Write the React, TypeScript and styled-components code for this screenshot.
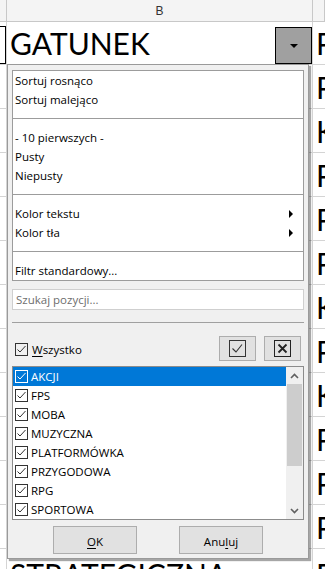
import React from "react";
import styled, { createGlobalStyle } from "styled-components";

const GlobalStyle = createGlobalStyle`
  html, body { margin: 0; padding: 0; background: #fff; }
  body { width: 325px; height: 569px; overflow: hidden; font-family: "Open Sans", sans-serif; }
  #root { width: 325px; height: 569px; }
`;

const Sheet = styled.div`
  position: relative;
  width: 325px;
  height: 569px;
  overflow: hidden;
  background: #fff;
`;

const HeaderRow = styled.div`
  display: grid;
  grid-template-columns: 7px 306px 1fr;
  height: 21px;
  background: #f4f4f4;
  border-bottom: 1px solid #c8c8c8;
`;

const HeaderCell = styled.div`
  border-right: 1px solid #c8c8c8;
  display: flex;
  align-items: center;
  justify-content: center;
  font: 12px "Liberation Sans", sans-serif;
  color: #333;
`;

const Row = styled.div<{ $h: number }>`
  display: grid;
  grid-template-columns: 7px 306px 1fr;
  height: ${(p) => p.$h}px;
  border-bottom: 1px solid #d4d4d4;
`;

const Cell = styled.div<{ $shift?: number }>`
  border-right: 1px solid #d4d4d4;
  display: flex;
  align-items: center;
  justify-content: space-between;
  overflow: hidden;
  white-space: nowrap;
  font: 30px "Lato", sans-serif;
  color: #000;
  padding-left: 3px;
  padding-top: ${(p) => p.$shift ?? 0}px;
`;

const FramedStub = styled.div`
  border-right: 1px solid #d4d4d4;
  display: flex;
  align-items: flex-end;
`;

const StubBox = styled.div`
  width: 5px;
  height: 36px;
  border: 1px solid #000;
  border-left: none;
  background: #fff;
`;

const TitleCell = styled(Cell)`
  align-items: stretch;
`;

const TitleText = styled.span`
  align-self: center;
`;

const DropButton = styled.div`
  align-self: flex-end;
  width: 35px;
  height: 35px;
  background: #a0a0a0;
  border: 1px solid #000;
  display: flex;
  align-items: center;
  justify-content: center;
`;

const SideCell = styled.div<{ $shift?: number }>`
  display: flex;
  align-items: center;
  overflow: hidden;
  white-space: nowrap;
  font: 30px "Lato", sans-serif;
  color: #000;
  padding-left: 3px;
  padding-top: ${(p) => p.$shift ?? 0}px;
`;

/* popup */
const Popup = styled.div`
  position: absolute;
  left: 7px;
  top: 64px;
  width: 302px;
  height: 495px;
  background: #f0f0f0;
  border: 1px solid #9a9a9a;
  box-shadow: 2px 2px 1px rgba(0, 0, 0, 0.35);
  padding: 5px 4px 4px 4px;
  box-sizing: border-box;
  display: flex;
  flex-direction: column;
  font-family: "Open Sans", sans-serif;
  font-size: 11.5px;
  color: #000;
`;

const MenuBox = styled.div`
  background: #fff;
  border: 1px solid #9c9c9c;
  display: flex;
  flex-direction: column;
`;

const MenuItem = styled.div`
  height: 19px;
  display: flex;
  align-items: center;
  justify-content: space-between;
  padding: 0 10px 0 2px;
  white-space: nowrap;
`;

const MenuSep = styled.div`
  height: 19px;
  display: flex;
  align-items: center;
  &::after {
    content: "";
    flex: 1;
    height: 1px;
    background: #9c9c9c;
  }
`;

const SubArrow = styled.span`
  width: 0;
  height: 0;
  border-top: 4px solid transparent;
  border-bottom: 4px solid transparent;
  border-left: 4px solid #000;
`;

const Search = styled.div`
  margin-top: 8px;
  height: 22px;
  box-sizing: border-box;
  background: #fff;
  border: 1px solid #cfcfcf;
  color: #6d6d6d;
  display: flex;
  align-items: center;
  padding-left: 3px;
`;

const Divider = styled.div`
  margin-top: 12px;
  height: 1px;
  background: #a0a0a0;
`;

const AllRow = styled.div`
  margin-top: 13px;
  height: 25px;
  display: flex;
  align-items: center;
  gap: 8px;
  padding: 0 3px 0 3px;
`;

const AllLabel = styled.label`
  flex: 1;
  display: flex;
  align-items: center;
  gap: 4px;
  padding-top: 2px;
`;

const IconButton = styled.div`
  width: 37px;
  height: 25px;
  box-sizing: border-box;
  background: #e1e1e1;
  border: 1px solid #adadad;
  display: flex;
  align-items: center;
  justify-content: center;
`;

const ListBox = styled.div`
  margin-top: 5px;
  height: 154px;
  box-sizing: border-box;
  background: #fff;
  border: 1px solid #8c8c8c;
  display: flex;
`;

const ListItems = styled.div`
  flex: 1;
  display: flex;
  flex-direction: column;
`;

const ListItem = styled.div<{ $selected?: boolean }>`
  height: 19px;
  display: flex;
  align-items: center;
  gap: 3px;
  padding-left: 2px;
  background: ${(p) => (p.$selected ? "#0078d7" : "transparent")};
  color: ${(p) => (p.$selected ? "#fff" : "#000")};
  white-space: nowrap;
`;

const ScrollBar = styled.div`
  width: 17px;
  background: #f0f0f0;
  display: flex;
  flex-direction: column;
`;

const ScrollArrow = styled.div`
  height: 17px;
  display: flex;
  align-items: center;
  justify-content: center;
`;

const ScrollTrack = styled.div`
  flex: 1;
  display: flex;
  flex-direction: column;
  padding: 0 1px;
`;

const Thumb = styled.div`
  height: 82px;
  background: #cdcdcd;
`;

const Footer = styled.div`
  margin-top: 6px;
  display: flex;
  justify-content: center;
  gap: 42px;
`;

const DialogButton = styled.div`
  width: 84px;
  height: 28px;
  box-sizing: border-box;
  background: #e1e1e1;
  border: 1px solid #adadad;
  display: flex;
  align-items: center;
  justify-content: center;
  padding-top: 2px;
`;

const U = styled.span`
  text-decoration: underline;
  text-underline-offset: 2px;
`;

const CheckBox: React.FC<{ light?: boolean }> = ({ light }) => (
  <svg width="13" height="13" viewBox="0 0 13 13" style={{ flex: "none" }}>
    <rect x="0.5" y="0.5" width="12" height="12" fill="none" stroke={light ? "#fff" : "#333"} />
    <polyline points="2.5,6.5 5,9 10.5,3" fill="none" stroke={light ? "#fff" : "#333"} strokeWidth="1" />
  </svg>
);

const Chevron: React.FC<{ up?: boolean }> = ({ up }) => (
  <svg width="9" height="6" viewBox="0 0 9 6">
    <polyline
      points={up ? "1,5 4.5,1.5 8,5" : "1,1 4.5,4.5 8,1"}
      fill="none"
      stroke="#606060"
      strokeWidth="1.6"
    />
  </svg>
);

const rightWords = [
  "PLATFORMA",
  "PC",
  "KONSOLA",
  "PC",
  "PC",
  "PC",
  "KONSOLA",
  "PC",
  "KONSOLA",
  "PC",
  "PC",
  "PC",
  "PC",
];

const bWords = ["", "", "", "", "", "", "", "", "", "", "", "STRATEGICZNA"];

const items = ["AKCJI", "FPS", "MOBA", "MUZYCZNA", "PLATFORMÓWKA", "PRZYGODOWA", "RPG", "SPORTOWA"];

export default function App() {
  return (
    <>
      <GlobalStyle />
      <Sheet>
        <HeaderRow>
          <HeaderCell />
          <HeaderCell>B</HeaderCell>
          <HeaderCell />
        </HeaderRow>
        <Row $h={42}>
          <FramedStub>
            <StubBox />
          </FramedStub>
          <TitleCell>
            <TitleText>GATUNEK</TitleText>
            <DropButton>
              <svg width="8" height="4" viewBox="0 0 8 4">
                <polygon points="0,0 8,0 4,4" fill="#000" />
              </svg>
            </DropButton>
          </TitleCell>
          <SideCell>{rightWords[0]}</SideCell>
        </Row>
        {bWords.map((w, i) => (
          <Row key={i} $h={43}>
            <Cell />
            <Cell $shift={i === bWords.length - 1 ? 6 : 0}>{w}</Cell>
            <SideCell $shift={i === bWords.length - 1 ? 6 : 0}>{rightWords[i + 1]}</SideCell>
          </Row>
        ))}

        <Popup>
          <MenuBox>
            <MenuItem>Sortuj rosnąco</MenuItem>
            <MenuItem>Sortuj malejąco</MenuItem>
            <MenuSep />
            <MenuItem>- 10 pierwszych -</MenuItem>
            <MenuItem>Pusty</MenuItem>
            <MenuItem>Niepusty</MenuItem>
            <MenuSep />
            <MenuItem>
              Kolor tekstu <SubArrow />
            </MenuItem>
            <MenuItem>
              Kolor tła <SubArrow />
            </MenuItem>
            <MenuSep />
            <MenuItem>Filtr standardowy...</MenuItem>
          </MenuBox>
          <Search>Szukaj pozycji...</Search>
          <Divider />
          <AllRow>
            <AllLabel>
              <CheckBox />
              <span>
                <U>W</U>szystko
              </span>
            </AllLabel>
            <IconButton>
              <svg width="17" height="17" viewBox="0 0 17 17">
                <rect x="0.5" y="0.5" width="16" height="16" fill="none" stroke="#333" />
                <polyline points="3.5,8.5 7,12 13,4.5" fill="none" stroke="#333" strokeWidth="1.1" />
              </svg>
            </IconButton>
            <IconButton>
              <svg width="17" height="17" viewBox="0 0 17 17">
                <rect x="0.5" y="0.5" width="16" height="16" fill="none" stroke="#222" />
                <path d="M4.5 4.5 L12.5 12.5 M12.5 4.5 L4.5 12.5" stroke="#222" strokeWidth="1.8" />
              </svg>
            </IconButton>
          </AllRow>
          <ListBox>
            <ListItems>
              {items.map((it, i) => (
                <ListItem key={it} $selected={i === 0}>
                  <CheckBox light={i === 0} />
                  <span>{it}</span>
                </ListItem>
              ))}
            </ListItems>
            <ScrollBar>
              <ScrollArrow>
                <Chevron up />
              </ScrollArrow>
              <ScrollTrack>
                <Thumb />
              </ScrollTrack>
              <ScrollArrow>
                <Chevron />
              </ScrollArrow>
            </ScrollBar>
          </ListBox>
          <Footer>
            <DialogButton>
              <span>
                <U>O</U>K
              </span>
            </DialogButton>
            <DialogButton>
              <span>
                Anu<U>l</U>uj
              </span>
            </DialogButton>
          </Footer>
        </Popup>
      </Sheet>
    </>
  );
}
